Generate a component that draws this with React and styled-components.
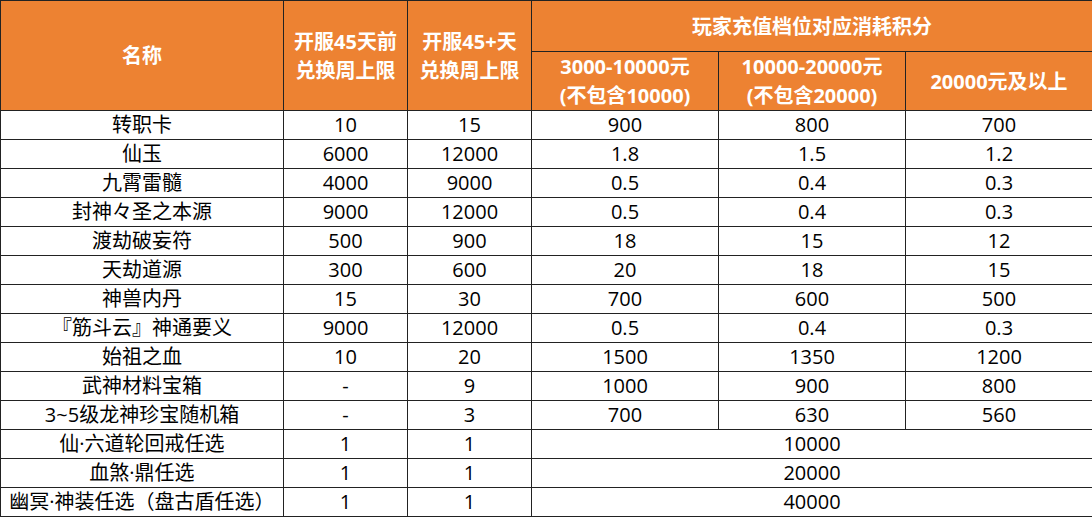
import React from "react";
import styled, { createGlobalStyle } from "styled-components";

const GlobalStyle = createGlobalStyle`
  html, body {
    margin: 0;
    padding: 0;
    background: #fff;
  }
  body {
    font-family: "Open Sans", "Noto Sans CJK SC", sans-serif;
  }
`

const Table = styled.table`
  width: 1092px;
  border-collapse: collapse;
  table-layout: fixed;
  color: #000;
  font-size: 20px;
`

const Col = styled.col`
  width: ${(props) => props.width}px;
`

const Th = styled.th`
  background-color: #ed8232;
  color: #fff;
  font-weight: bold;
  border: 1px solid #222;
  text-align: center;
  padding: 0;
  line-height: 29px;
  white-space: nowrap;
  height: ${(props) => props.h || 0}px;
`

const Td = styled.td`
  border: 1px solid #222;
  text-align: center;
  padding: 0;
  height: 28px;
  line-height: 28px;
  white-space: nowrap;
`

const rows = [
  ["转职卡", "10", "15", "900", "800", "700"],
  ["仙玉", "6000", "12000", "1.8", "1.5", "1.2"],
  ["九霄雷髓", "4000", "9000", "0.5", "0.4", "0.3"],
  ["封神々圣之本源", "9000", "12000", "0.5", "0.4", "0.3"],
  ["渡劫破妄符", "500", "900", "18", "15", "12"],
  ["天劫道源", "300", "600", "20", "18", "15"],
  ["神兽内丹", "15", "30", "700", "600", "500"],
  ["『筋斗云』神通要义", "9000", "12000", "0.5", "0.4", "0.3"],
  ["始祖之血", "10", "20", "1500", "1350", "1200"],
  ["武神材料宝箱", "-", "9", "1000", "900", "800"],
  ["3~5级龙神珍宝随机箱", "-", "3", "700", "630", "560"],
  ["仙·六道轮回戒任选", "1", "1", "10000"],
  ["血煞·鼎任选", "1", "1", "20000"],
  ["幽冥·神装任选（盘古盾任选）", "1", "1", "40000"],
]

const App = () => {
  return (
    <>
      <GlobalStyle />
      <Table>
        <colgroup>
          <Col width={283} />
          <Col width={124} />
          <Col width={124} />
          <Col width={187} />
          <Col width={187} />
          <Col width={187} />
        </colgroup>
        <thead>
          <tr>
            <Th rowSpan={2}>名称</Th>
            <Th rowSpan={2}>开服45天前<br />兑换周上限</Th>
            <Th rowSpan={2}>开服45+天<br />兑换周上限</Th>
            <Th colSpan={3} h={50}>玩家充值档位对应消耗积分</Th>
          </tr>
          <tr>
            <Th h={57}>3000-10000元<br />(不包含10000)</Th>
            <Th h={57}>10000-20000元<br />(不包含20000)</Th>
            <Th h={57}>20000元及以上</Th>
          </tr>
        </thead>
        <tbody>
          {rows.map((item, i) => (
            <tr key={i}>
              {item.length === 4 ? (
                <>
                  <Td>{item[0]}</Td>
                  <Td>{item[1]}</Td>
                  <Td>{item[2]}</Td>
                  <Td colSpan={3}>{item[3]}</Td>
                </>
              ) : (
                item.map((v, j) => <Td key={j}>{v}</Td>)
              )}
            </tr>
          ))}
        </tbody>
      </Table>
    </>
  )
}

export default App;
